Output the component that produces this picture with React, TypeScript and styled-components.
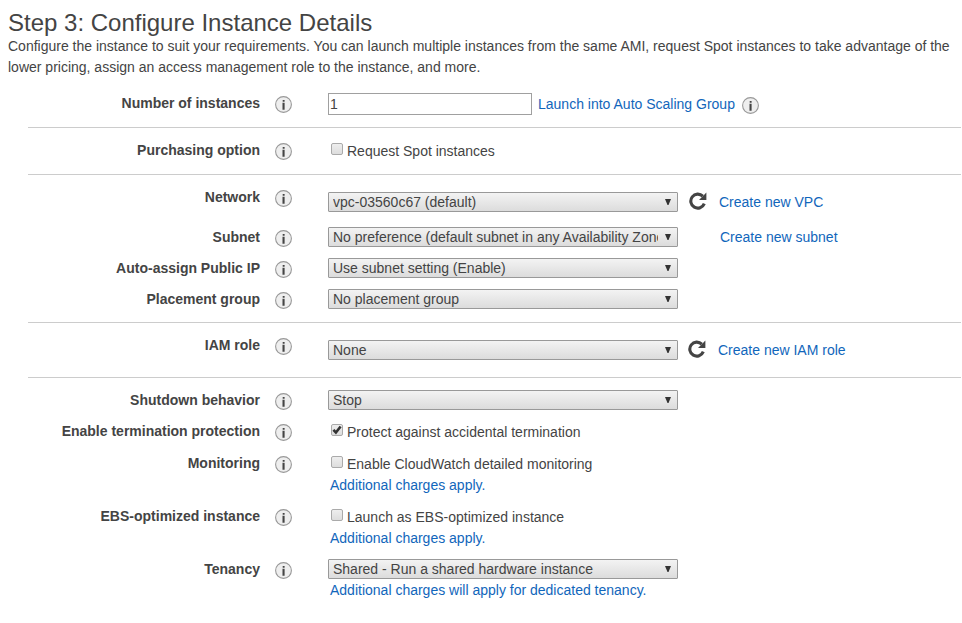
import React from "react";
import styled, { createGlobalStyle } from "styled-components";

const GlobalStyle = createGlobalStyle`
  * { box-sizing: border-box; }
  body {
    margin: 0;
    background: #fff;
    color: #444;
    font: 14px/21px "Liberation Sans", Arial, sans-serif;
    overflow: hidden;
  }
`;

const Page = styled.main`
  width: 962px;
  height: 623px;
  padding-top: 11px;
  overflow: hidden;
`;

const Header = styled.header`
  height: 82px;
  padding-left: 8px;
`;

const Title = styled.h1`
  margin: 0;
  font-size: 24px;
  font-weight: normal;
  line-height: 24px;
`;

const Intro = styled.p`
  margin: 1px 0 0;
  width: 950px;
`;

const Section = styled.section<{ $first?: boolean; $last?: boolean }>`
  margin: 0 1px 0 28px;
  padding-top: ${(p) => (p.$first ? 0 : 12)}px;
  border-bottom: ${(p) => (p.$last ? "none" : "1px solid #ccc")};
`;

const Row = styled.div<{ $height: number }>`
  display: grid;
  grid-template-columns: 232px 68px 1fr;
  align-items: start;
  height: ${(p) => p.$height}px;
`;

const Label = styled.label`
  font-weight: bold;
  text-align: right;
`;

const InfoCell = styled.div`
  display: flex;
  padding: 3px 0 0 15px;
`;

const Control = styled.div<{ $offset?: number }>`
  padding-top: ${(p) => p.$offset ?? 0}px;
`;

const Line = styled.div`
  display: flex;
  align-items: flex-start;
`;

const NumberInput = styled.input`
  width: 204px;
  height: 22px;
  padding: 0 1px;
  border: 1px solid #a0a0a0;
  border-radius: 0;
  background: #fff;
  color: #444;
  font: inherit;
`;

const SelectBox = styled.div`
  display: flex;
  align-items: center;
  width: 350px;
  height: 20px;
  flex: none;
  padding: 0 6px 0 4px;
  border: 1px solid #999;
  border-radius: 1px;
  background: linear-gradient(#f3f3f3, #dcdcdc);
  line-height: 18px;
`;

const SelectValue = styled.span`
  flex: 1;
  overflow: hidden;
  white-space: nowrap;
  margin-right: 7px;
`;

const Link = styled.a<{ $left?: number; $top?: number }>`
  margin-left: ${(p) => p.$left ?? 0}px;
  margin-top: ${(p) => p.$top ?? 0}px;
  color: #1166bb;
  text-decoration: none;
  white-space: nowrap;
`;

const Note = styled.div<{ $top?: number }>`
  padding: ${(p) => p.$top ?? 0}px 0 0 2px;
`;

const CheckLine = styled.label`
  display: flex;
  align-items: flex-start;
  gap: 4px;
  padding-left: 3px;
`;

const CheckSvg = styled.svg`
  display: block;
  flex: none;
  margin-top: 2px;
`;

const TrailingInfo = styled.span`
  display: flex;
  margin: 4px 0 0 7px;
`;

const RefreshButton = styled.button<{ $left: number }>`
  display: flex;
  margin: 0 0 0 ${(p) => p.$left}px;
  padding: 0;
  border: 0;
  background: none;
`;

function Info() {
  return (
    <svg width="17" height="17" viewBox="0 0 17 17">
      <circle cx="8.5" cy="8.5" r="7.9" fill="#eee" stroke="#999" strokeWidth="1.1" />
      <path d="M7.7 4h1.9v1.8H7.7zM7.7 6.8h1.9v7H7.7z" fill="#444" />
      <path d="M7 6.8h.7v7H7z" fill="#444" opacity=".4" />
    </svg>
  );
}

function Refresh({ left }: { left: number }) {
  return (
    <RefreshButton $left={left} aria-label="Refresh">
      <svg width="18" height="18" viewBox="0 0 18 18">
        <path d="M13.8 4.2A7 7 0 1 0 15.3 11.7" fill="none" stroke="#444" strokeWidth="3.1" />
        <path d="M17.4 .5v7.4H10z" fill="#444" />
      </svg>
    </RefreshButton>
  );
}

function Select({ value }: { value: string }) {
  return (
    <SelectBox role="combobox">
      <SelectValue>{value}</SelectValue>
      <svg width="6" height="8" viewBox="0 0 6 8">
        <path d="M0 1h6L3.5 7h-1z" fill="#333" />
      </svg>
    </SelectBox>
  );
}

function Check({ text, checked }: { text: string; checked?: boolean }) {
  return (
    <CheckLine>
      <CheckSvg width="12" height="12" viewBox="0 0 12 12">
        <defs>
          <linearGradient id="box" x1="0" y1="0" x2="0" y2="1">
            <stop offset="0" stopColor="#efefef" />
            <stop offset="1" stopColor="#dcdcdc" />
          </linearGradient>
        </defs>
        <rect x=".5" y=".5" width="11" height="11" rx="1.5" fill="url(#box)" stroke="#aaa" />
        {checked && <path d="M2.4 5.8l2.5 2.7 4.7-6" fill="none" stroke="#333" strokeWidth="2.6" />}
      </CheckSvg>
      <span>{text}</span>
    </CheckLine>
  );
}

function Field(props: {
  label: string;
  height: number;
  offset?: number;
  children: React.ReactNode;
}) {
  return (
    <Row $height={props.height}>
      <Label>{props.label}</Label>
      <InfoCell>
        <Info />
      </InfoCell>
      <Control $offset={props.offset}>{props.children}</Control>
    </Row>
  );
}

export default function App() {
  return (
    <Page>
      <GlobalStyle />
      <Header>
        <Title>Step 3: Configure Instance Details</Title>
        <Intro>
          Configure the instance to suit your requirements. You can launch multiple instances from
          the same AMI, request Spot instances to take advantage of the lower pricing, assign an
          access management role to the instance, and more.
        </Intro>
      </Header>

      <Section $first>
        <Field label="Number of instances" height={34}>
          <Line>
            <NumberInput defaultValue="1" />
            <Link $left={6} $top={1}>Launch into Auto Scaling Group</Link>
            <TrailingInfo>
              <Info />
            </TrailingInfo>
          </Line>
        </Field>
      </Section>

      <Section>
        <Field label="Purchasing option" height={34} offset={1}>
          <Check text="Request Spot instances" />
        </Field>
      </Section>

      <Section>
        <Field label="Network" height={40} offset={5}>
          <Line>
            <Select value="vpc-03560c67 (default)" />
            <Refresh left={11} />
            <Link $left={12}>Create new VPC</Link>
          </Line>
        </Field>
        <Field label="Subnet" height={31}>
          <Line>
            <Select value="No preference (default subnet in any Availability Zone)" />
            <Link $left={42}>Create new subnet</Link>
          </Line>
        </Field>
        <Field label="Auto-assign Public IP" height={31}>
          <Select value="Use subnet setting (Enable)" />
        </Field>
        <Field label="Placement group" height={33}>
          <Select value="No placement group" />
        </Field>
      </Section>

      <Section>
        <Field label="IAM role" height={42} offset={5}>
          <Line>
            <Select value="None" />
            <Refresh left={10} />
            <Link $left={12}>Create new IAM role</Link>
          </Line>
        </Field>
      </Section>

      <Section $last>
        <Field label="Shutdown behavior" height={31}>
          <Select value="Stop" />
        </Field>
        <Field label="Enable termination protection" height={32} offset={1}>
          <Check text="Protect against accidental termination" checked />
        </Field>
        <Field label="Monitoring" height={53} offset={1}>
          <Check text="Enable CloudWatch detailed monitoring" />
          <Note>
            <Link>Additional charges apply.</Link>
          </Note>
        </Field>
        <Field label="EBS-optimized instance" height={53} offset={1}>
          <Check text="Launch as EBS-optimized instance" />
          <Note>
            <Link>Additional charges apply.</Link>
          </Note>
        </Field>
        <Field label="Tenancy" height={53}>
          <Select value="Shared - Run a shared hardware instance" />
          <Note $top={1}>
            <Link>Additional charges will apply for dedicated tenancy.</Link>
          </Note>
        </Field>
      </Section>
    </Page>
  );
}
